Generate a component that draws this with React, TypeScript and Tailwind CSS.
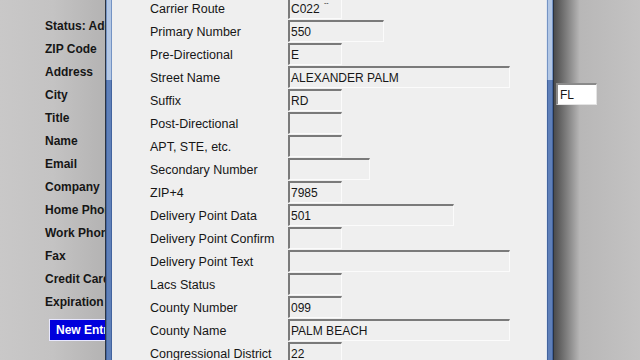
const LEFT_LABELS = [
  'Status: Address',
  'ZIP Code',
  'Address',
  'City',
  'Title',
  'Name',
  'Email',
  'Company',
  'Home Phone',
  'Work Phone',
  'Fax',
  'Credit Card',
  'Expiration',
]

// label, value, box width
const FIELDS: [string, string, number][] = [
  ['Carrier Route', 'C022', 54],
  ['Primary Number', '550', 96],
  ['Pre-Directional', 'E', 54],
  ['Street Name', 'ALEXANDER PALM', 222],
  ['Suffix', 'RD', 54],
  ['Post-Directional', '', 54],
  ['APT, STE, etc.', '', 54],
  ['Secondary Number', '', 82],
  ['ZIP+4', '7985', 54],
  ['Delivery Point Data', '501', 166],
  ['Delivery Point Confirm', '', 54],
  ['Delivery Point Text', '', 222],
  ['Lacs Status', '', 54],
  ['County Number', '099', 54],
  ['County Name', 'PALM BEACH', 222],
  ['Congressional District', '22', 54],
]

function FrameBand() {
  return (
    <div className="flex flex-col w-[6px] shrink-0">
      <div className="h-[80px] bg-[#b3c7e4] border-x border-x-[#7493c4]" />
      <div className="flex-1 bg-[#5f80b9] border-x border-x-[#42639e]" />
    </div>
  )
}

export default function App() {
  return (
    <div
      className="flex w-[640px] h-[360px] overflow-hidden bg-[#c5c4c4] text-[#161616]"
      style={{ fontFamily: '"Liberation Sans", Arial, sans-serif' }}
    >
      {/* Main window behind */}
      <div className="relative w-[105px] shrink-0 overflow-hidden bg-gradient-to-r from-[#c9c8c8] via-[#c4c3c3] to-[#b4b3b3]">
        <div className="flex flex-col pt-[14px] pl-[45px] whitespace-nowrap">
          {LEFT_LABELS.map((label) => (
            <div key={label} className="h-[23px] flex items-center text-[12px] font-bold">
              {label}
            </div>
          ))}
          <div className="mt-[6px] ml-[4px] w-[90px] h-[22px] flex items-center pl-[6px] bg-[#0000dc] border border-[#e8e8ff] text-white text-[12px] font-bold">
            New Entry
          </div>
        </div>
      </div>

      {/* Dialog */}
      <div className="flex w-[449px] shrink-0">
        <div className="w-px bg-[#2b3442]" />
        <FrameBand />
        <div className="flex-1 bg-[#efefef] pl-[38px] overflow-hidden">
          <div className="flex flex-col gap-px mt-[-3px]">
            {FIELDS.map(([label, value, width], i) => (
              <div key={label} className="flex items-center h-[22px]">
                <div className="w-[138px] shrink-0 text-[12.5px] pt-[3px] whitespace-nowrap">
                  {label}
                </div>
                <div
                  className="relative h-[22px] flex items-center pl-px pt-px border-t-2 border-l-2 border-t-[#7a7a7a] border-l-[#7a7a7a] border-r border-b border-r-[#fbfbfb] border-b-[#fbfbfb] bg-[#efefef] text-[12px] whitespace-nowrap"
                  style={{ width }}
                >
                  {value}
                  {i === 0 && (
                    <span className="absolute left-[34px] top-0 text-[7px] leading-none">--</span>
                  )}
                </div>
              </div>
            ))}
          </div>
        </div>
        <div className="w-px bg-[#dfe6f0]" />
        <FrameBand />
        <div className="w-px bg-[#283241]" />
      </div>

      {/* Right side with dialog shadow */}
      <div className="flex-1 relative bg-gradient-to-r from-[#4c4c4c] via-[#b8b7b7] via-30% to-[#c4c3c3]">
        <div className="ml-[2px] mt-[83px] w-[41px] h-[22px] flex items-center pl-[2px] bg-white border-t-2 border-l-2 border-t-[#8a8a8a] border-l-[#8a8a8a] border-r border-b border-r-[#e4e4e4] border-b-[#e4e4e4] text-[12px]">
          FL
        </div>
      </div>
    </div>
  )
}
